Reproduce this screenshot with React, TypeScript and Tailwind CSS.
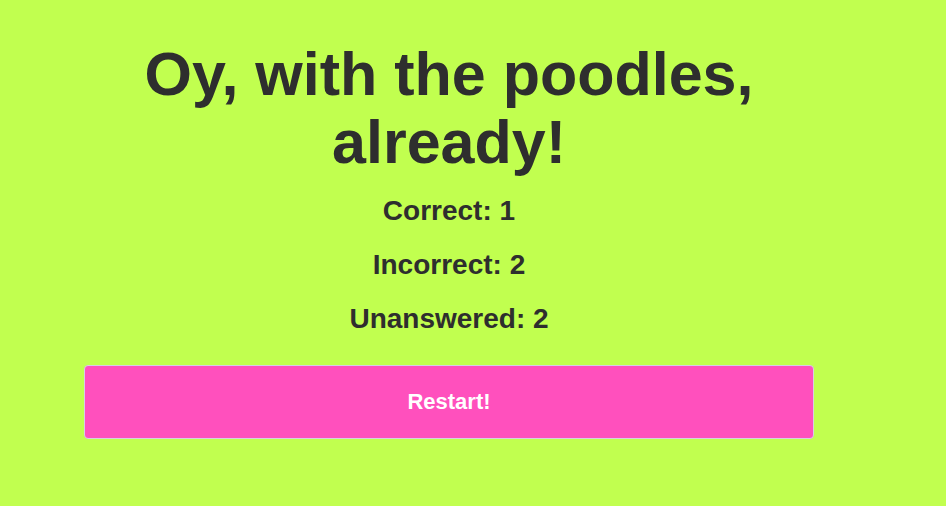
export default function App() {
  const results = [
    { label: "Correct", value: 1 },
    { label: "Incorrect", value: 2 },
    { label: "Unanswered", value: 2 },
  ];

  return (
    <div className="h-[506px] w-full bg-[#c1ff4f] font-['Liberation_Sans',Arial,sans-serif]">
      <div className="ml-[84px] w-[730px] pt-[40px]">
        <h1 className="text-center text-[61px] font-bold leading-[68px] text-[#2e2e2e]">
          Oy, with the poodles, already!
        </h1>

        <div className="mt-[19px] flex flex-col gap-[22px]">
          {results.map((r) => (
            <p
              key={r.label}
              className="text-center text-[28px] font-bold leading-[32px] text-[#2e2e2e]"
            >
              {r.label}: {r.value}
            </p>
          ))}
        </div>

        <button className="mt-[30px] flex h-[74px] w-full items-center justify-center rounded-[4px] border border-[#d6d0e4] bg-[#ff50bd] text-[22px] font-bold leading-[26px] text-white">
          Restart!
        </button>
      </div>
    </div>
  );
}
